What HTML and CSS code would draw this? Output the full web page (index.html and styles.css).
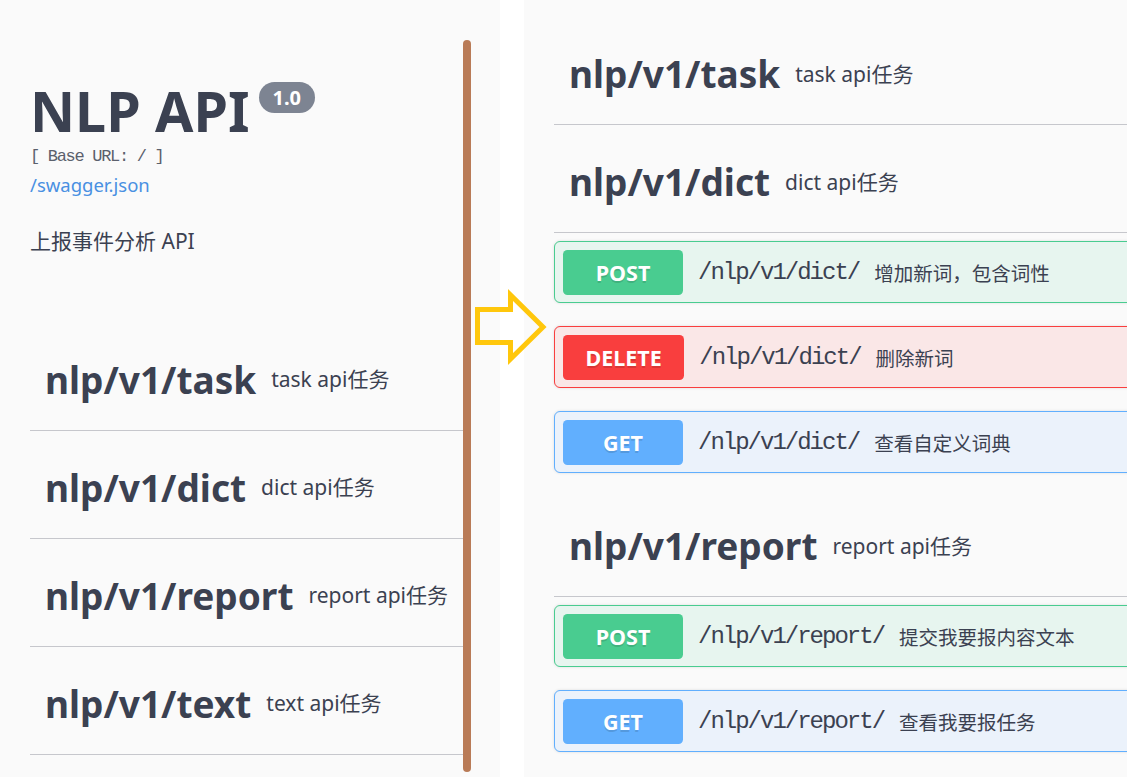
FILE: index.html
```html
<!DOCTYPE html>
<html lang="zh">
<head>
<meta charset="utf-8">
<title>NLP API</title>
<link rel="stylesheet" href="styles.css">
</head>
<body>
<div class="stage">
  <section class="panel panel-left">
    <div class="info">
      <div class="title-row">
        <h2 class="title">NLP API</h2>
        <span class="version">1.0</span>
      </div>
      <div class="base-url">[ Base URL: / ]</div>
      <a class="spec-link" href="#">/swagger.json</a>
      <p class="info-desc">上报事件分析 API</p>
    </div>
    <div class="tags tags-left">
      <h4 class="tag"><span class="tag-name">nlp/v1/task</span><small class="tag-desc">task api任务</small></h4>
      <h4 class="tag"><span class="tag-name">nlp/v1/dict</span><small class="tag-desc">dict api任务</small></h4>
      <h4 class="tag"><span class="tag-name">nlp/v1/report</span><small class="tag-desc">report api任务</small></h4>
      <h4 class="tag"><span class="tag-name">nlp/v1/text</span><small class="tag-desc">text api任务</small></h4>
    </div>
  </section>

  <section class="panel panel-right">
    <div class="right-inner">
      <div class="tag-section">
        <h4 class="tag"><span class="tag-name">nlp/v1/task</span><small class="tag-desc">task api任务</small></h4>
      </div>
      <div class="tag-section">
        <h4 class="tag"><span class="tag-name">nlp/v1/dict</span><small class="tag-desc">dict api任务</small></h4>
        <div class="ops">
          <div class="opblock op-post">
            <span class="method">POST</span>
            <span class="path">/nlp/v1/dict/</span>
            <span class="op-desc">增加新词，包含词性</span>
          </div>
          <div class="opblock op-delete">
            <span class="method">DELETE</span>
            <span class="path">/nlp/v1/dict/</span>
            <span class="op-desc">删除新词</span>
          </div>
          <div class="opblock op-get">
            <span class="method">GET</span>
            <span class="path">/nlp/v1/dict/</span>
            <span class="op-desc">查看自定义词典</span>
          </div>
        </div>
      </div>
      <div class="tag-section">
        <h4 class="tag"><span class="tag-name">nlp/v1/report</span><small class="tag-desc">report api任务</small></h4>
        <div class="ops">
          <div class="opblock op-post">
            <span class="method">POST</span>
            <span class="path">/nlp/v1/report/</span>
            <span class="op-desc">提交我要报内容文本</span>
          </div>
          <div class="opblock op-get">
            <span class="method">GET</span>
            <span class="path">/nlp/v1/report/</span>
            <span class="op-desc">查看我要报任务</span>
          </div>
        </div>
      </div>
    </div>
  </section>

  <div class="divider-bar"></div>
  <svg class="arrow" width="80" height="85" viewBox="0 0 80 85">
    <polygon points="7.5,24.5 40.5,24.5 40.5,10 73,42 40.5,74 40.5,57.5 7.5,57.5" fill="none" stroke="#ffc70c" stroke-width="5" stroke-linejoin="miter"/>
  </svg>
</div>
</body>
</html>
```

FILE: styles.css
```css
html, body {
  margin: 0;
  padding: 0;
  background: #ffffff;
  height: 777px;
  overflow: hidden;
}

body {
  font-family: "Noto Sans", "Noto Sans CJK SC", sans-serif;
  color: #3b4151;
}

.stage {
  position: relative;
  display: flex;
  height: 777px;
}

.panel {
  background: #fafafa;
  height: 777px;
  box-sizing: border-box;
}

.panel-left {
  width: 500px;
  flex: none;
  padding: 78px 33px 0 30px;
}

.panel-right {
  flex: 1;
  margin-left: 24px;
  padding: 25px 0 0 30px;
  overflow: hidden;
}

.right-inner {
  width: 640px;
}

/* info block */
.title-row {
  display: flex;
  align-items: flex-start;
  gap: 9px;
}

.title {
  margin: 0;
  font-size: 55.5px;
  line-height: 66px;
  font-weight: 700;
  color: #3b4151;
}

.version {
  margin-top: 4px;
  background: #7d8492;
  color: #ffffff;
  font-size: 20px;
  font-weight: 700;
  line-height: 31px;
  padding: 0 14px;
  border-radius: 16px;
}

.base-url {
  margin-top: 3px;
  font-family: "Liberation Mono", monospace;
  font-size: 17px;
  letter-spacing: -1.3px;
  line-height: 20px;
  color: #5b606c;
}

.spec-link {
  display: block;
  margin-top: 5.5px;
  font-size: 18.5px;
  line-height: 24px;
  color: #4990e2;
  text-decoration: none;
}

.info-desc {
  margin: 30px 0 0;
  font-size: 21px;
  line-height: 28px;
  color: #3b4151;
}

.tags-left {
  margin-top: 76px;
}

/* tag headings */
.tag {
  display: flex;
  align-items: center;
  margin: 0 0 8px;
  padding: 22px 10px 23px 15px;
  border-bottom: 1.5px solid #c6c7cc;
  white-space: nowrap;
}

.tag-name {
  font-size: 37px;
  line-height: 54px;
  font-weight: 700;
  color: #3b4151;
}

.tag-desc {
  font-size: 21px;
  line-height: 1;
  font-weight: 400;
  padding: 0 15px;
  color: #3b4151;
}

/* operations */
.ops {
  padding-bottom: 1px;
}

.opblock {
  display: flex;
  align-items: center;
  height: 62px;
  box-sizing: border-box;
  padding: 0 8px;
  margin-bottom: 23px;
  border: 1px solid;
  border-radius: 6px;
  box-shadow: 0 0 3px rgba(0, 0, 0, 0.12);
}

.method {
  min-width: 120px;
  box-sizing: border-box;
  padding: 9px 22.5px;
  font-size: 21.5px;
  line-height: 27px;
  font-weight: 700;
  text-align: center;
  color: #ffffff;
  border-radius: 4.5px;
  text-shadow: 0 1.5px 0 rgba(0, 0, 0, 0.12);
}

.path {
  padding: 0 15px;
  font-family: "Liberation Mono", monospace;
  font-size: 24px;
  letter-spacing: -2px;
  color: #3b4151;
}

.op-desc {
  font-size: 19.5px;
  color: #3b4151;
}

.op-post {
  border-color: #49cc90;
  background: #e7f5ef;
}
.op-post .method { background: #49cc90; }

.op-delete {
  border-color: #f93e3e;
  background: #fae7e7;
}
.op-delete .method { background: #f93e3e; }

.op-get {
  border-color: #61affe;
  background: #ebf2fb;
}
.op-get .method { background: #61affe; }

/* overlays */
.divider-bar {
  position: absolute;
  left: 463px;
  top: 40px;
  width: 8px;
  height: 732px;
  background: #b97b57;
  border-radius: 4px;
}

.arrow {
  position: absolute;
  left: 470px;
  top: 285px;
}
```
